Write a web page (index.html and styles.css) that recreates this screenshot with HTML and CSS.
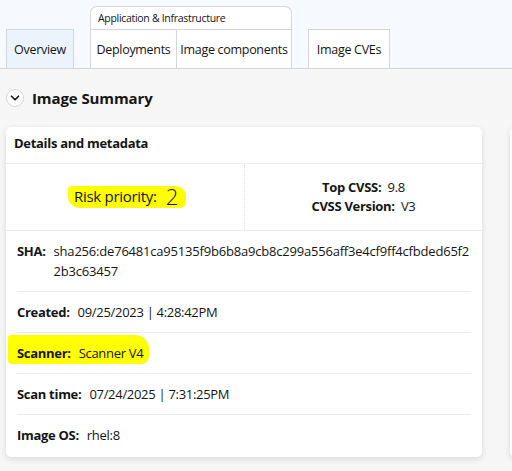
FILE: index.html
```html
<!DOCTYPE html>
<html lang="en">
<head>
<meta charset="utf-8">
<title>Image Summary</title>
<link rel="stylesheet" href="styles.css">
</head>
<body>
<div class="tabbar">
  <div class="tab tab-active tab-overview">Overview</div>
  <div class="tab-group">
    <div class="group-title">Application &amp; Infrastructure</div>
    <div class="group-tabs">
      <div class="tab tab-in-group tab-deploy">Deployments</div>
      <div class="tab tab-in-group tab-components">Image components</div>
    </div>
  </div>
  <div class="tab tab-cves">Image CVEs</div>
</div>

<main class="content">
  <div class="section-head">
    <span class="toggle">
      <svg width="10" height="10" viewBox="0 0 10 10"><path d="M1.5 3.2 L5 6.8 L8.5 3.2" fill="none" stroke="#151515" stroke-width="1.6" stroke-linecap="round" stroke-linejoin="round"/></svg>
    </span>
    <h2 class="section-title">Image Summary</h2>
  </div>

  <div class="cards">
    <section class="card">
      <div class="card-title">Details and metadata</div>
      <div class="score-row">
        <div class="score-cell">
          <span class="hl hl-risk"><span class="risk-label">Risk priority:</span><span class="risk-value">2</span></span>
        </div>
        <div class="score-cell score-right">
          <div><b>Top CVSS:</b>&nbsp; 9.8</div>
          <div><b>CVSS Version:</b>&nbsp; V3</div>
        </div>
      </div>
      <div class="rows">
        <div class="row"><b class="label">SHA:</b><span class="value sha">sha256:de76481ca95135f9b6b8a9cb8c299a556aff3e4cf9ff4cfbded65f22b3c63457</span></div>
        <div class="row"><b class="label">Created:</b><span class="value">09/25/2023 | 4:28:42PM</span></div>
        <div class="row"><span class="hl hl-scanner"><b class="label">Scanner:</b><span class="value">Scanner V4</span></span></div>
        <div class="row"><b class="label">Scan time:</b><span class="value">07/24/2025 | 7:31:25PM</span></div>
        <div class="row"><b class="label">Image OS:</b><span class="value">rhel:8</span></div>
      </div>
    </section>
    <section class="card card-next"></section>
  </div>
</main>
</body>
</html>
```

FILE: styles.css
```css
* { box-sizing: border-box; }

html, body {
  margin: 0;
  padding: 0;
  width: 512px;
  height: 471px;
  overflow: hidden;
  background: #f6f6f6;
  font-family: "Open Sans", "Liberation Sans", sans-serif;
  color: #151515;
  font-size: 13px;
  letter-spacing: -0.3px;
}

.tabbar {
  display: flex;
  align-items: flex-end;
  gap: 16px;
  height: 69px;
  padding: 6px 0 0 6px;
  background: #f6f9fd;
  border-bottom: 1px solid #d6d6d6;
}

.tab {
  height: 39px;
  display: flex;
  align-items: center;
  justify-content: center;
  background: #fff;
  border: 1px solid #d6d6d6;
  border-bottom: none;
  font-size: 12.5px;
  color: #151515;
  white-space: nowrap;
}

.tab-overview { width: 68px; background: #ebf4fd; }
.tab-deploy { width: 85px; }
.tab-components { width: 115px; }
.tab-cves { width: 82px; }

.tab-group {
  display: flex;
  flex-direction: column;
  border: 1px solid #d6d6d6;
  border-bottom: none;
  border-radius: 7px 7px 0 0;
  background: #fff;
}

.group-title {
  height: 23px;
  display: flex;
  align-items: center;
  padding: 0 7px;
  font-size: 10.5px;
  border-bottom: 1px solid #d6d6d6;
}

.group-tabs {
  display: flex;
}

.tab-in-group {
  border: none;
  height: 38px;
}

.tab-in-group + .tab-in-group {
  border-left: 1px solid #d6d6d6;
}

.content {
  padding: 0 6px;
}

.section-head {
  display: flex;
  align-items: center;
  gap: 8px;
  height: 58px;
}

.toggle {
  width: 18px;
  height: 18px;
  border-radius: 50%;
  border: 1px solid #d6d6d6;
  background: #fff;
  display: flex;
  align-items: center;
  justify-content: center;
}

.section-title {
  margin: 0;
  font-size: 15px;
  font-weight: 700;
  letter-spacing: -0.1px;
}

.cards {
  display: grid;
  grid-template-columns: 476px 476px;
  gap: 28px;
}

.card {
  background: #fff;
  border-radius: 5px;
  box-shadow: 0 2px 6px rgba(0, 0, 0, 0.12);
  height: 330px;
}

.card-title {
  padding: 6px 8px 10px;
  line-height: 20px;
  font-weight: 700;
  font-size: 13px;
  border-bottom: 1px solid #ececec;
}

.score-row {
  display: grid;
  grid-template-columns: 1fr 1fr;
  border-bottom: 1px solid #ececec;
}

.score-cell {
  display: flex;
  flex-direction: column;
  align-items: center;
  justify-content: center;
  padding: 14px 0;
  line-height: 19px;
  font-size: 13px;
}

.score-right {
  border-left: 1px dotted #e2e2e2;
}

.hl {
  background: #ffff00;
  border-radius: 4px 10px 6px 12px;
}

.hl-risk {
  display: inline-flex;
  align-items: center;
  padding: 1px 8px 2px 6px;
  margin-left: 4px;
}

.risk-label {
  font-size: 15px;
}

.risk-value {
  font-size: 22px;
  font-weight: 300;
  margin-left: 9px;
}

.rows {
  padding: 0 11px;
}

.row {
  display: flex;
  padding: 10px 0;
  line-height: 20px;
  border-bottom: 1px solid #ececec;
}

.row:last-child {
  border-bottom: none;
}

.label {
  font-weight: 700;
  flex: none;
  margin-right: 8px;
}

.sha {
  word-break: break-all;
  letter-spacing: -0.2px;
}

.hl-scanner {
  display: inline-flex;
  align-items: center;
  margin: -8px 0 -1px -9px;
  padding: 8px 6px 1px 9px;
  border-radius: 3px 14px 8px 4px;
}
```
